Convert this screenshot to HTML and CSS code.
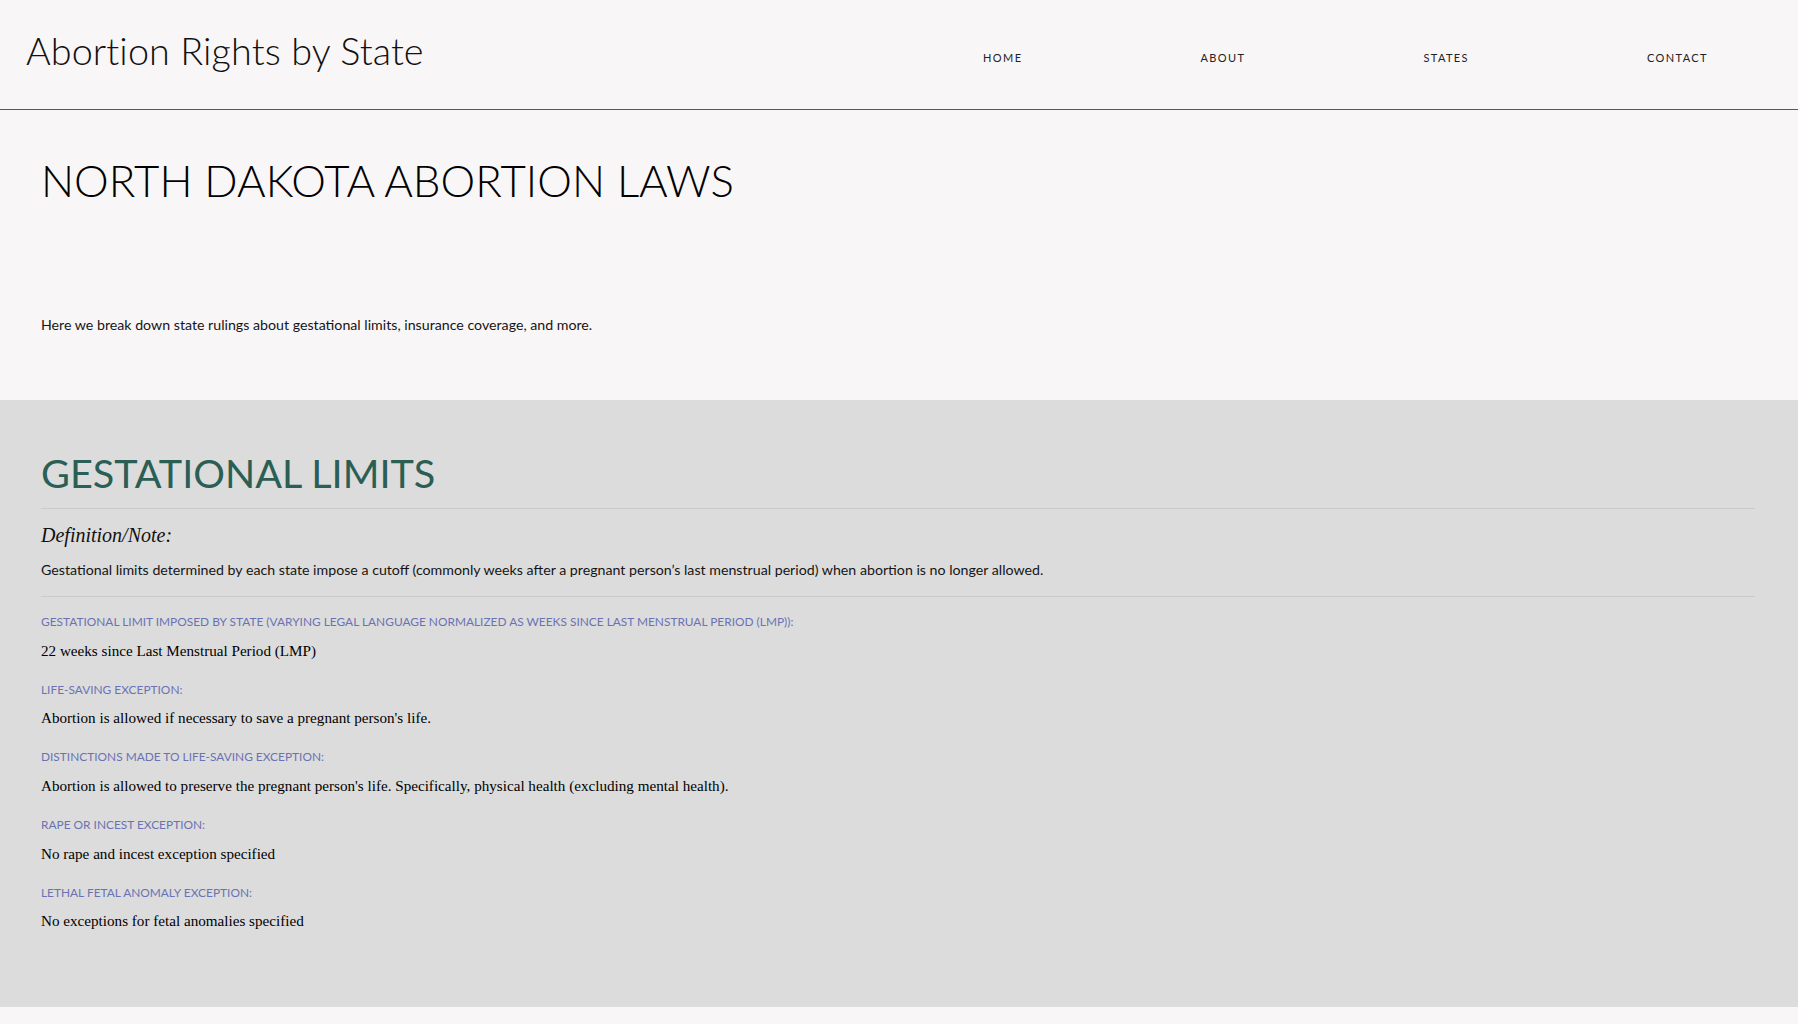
FILE: index.html
```html
<!DOCTYPE html>
<html lang="en">
<head>
<meta charset="utf-8">
<title>North Dakota Abortion Laws</title>
<link rel="stylesheet" href="styles.css">
</head>
<body>
<header class="site-header">
  <div class="site-title">Abortion Rights by State</div>
  <nav class="main-nav">
    <a class="nav-link" href="#">HOME</a>
    <a class="nav-link" href="#">ABOUT</a>
    <a class="nav-link" href="#">STATES</a>
    <a class="nav-link" href="#">CONTACT</a>
  </nav>
</header>
<section class="hero">
  <h1 class="page-title">NORTH DAKOTA ABORTION LAWS</h1>
  <p class="intro">Here we break down state rulings about gestational limits, insurance coverage, and more.</p>
</section>
<section class="panel">
  <h2 class="panel-title">GESTATIONAL LIMITS</h2>
  <div class="rule"></div>
  <div class="def-label">Definition/Note:</div>
  <p class="def-text">Gestational limits determined by each state impose a cutoff (commonly weeks after a pregnant person’s last menstrual period) when abortion is no longer allowed.</p>
  <div class="rule rule-second"></div>
  <dl class="facts">
    <dt class="fact-label">GESTATIONAL LIMIT IMPOSED BY STATE (VARYING LEGAL LANGUAGE NORMALIZED AS WEEKS SINCE LAST MENSTRUAL PERIOD (LMP)):</dt>
    <dd class="fact-value">22 weeks since Last Menstrual Period (LMP)</dd>
    <dt class="fact-label">LIFE-SAVING EXCEPTION:</dt>
    <dd class="fact-value">Abortion is allowed if necessary to save a pregnant person's life.</dd>
    <dt class="fact-label">DISTINCTIONS MADE TO LIFE-SAVING EXCEPTION:</dt>
    <dd class="fact-value">Abortion is allowed to preserve the pregnant person's life. Specifically, physical health (excluding mental health).</dd>
    <dt class="fact-label">RAPE OR INCEST EXCEPTION:</dt>
    <dd class="fact-value">No rape and incest exception specified</dd>
    <dt class="fact-label">LETHAL FETAL ANOMALY EXCEPTION:</dt>
    <dd class="fact-value">No exceptions for fetal anomalies specified</dd>
  </dl>
</section>
<div class="page-end"></div>
</body>
</html>
```

FILE: styles.css
```css
html, body {
  margin: 0;
  padding: 0;
}
body {
  background: #f9f6f7;
  font-family: "Lato", "Open Sans", sans-serif;
  color: #111;
}
.site-header {
  height: 110px;
  box-sizing: border-box;
  border-bottom: 1px solid #555a55;
  display: flex;
  justify-content: space-between;
  align-items: flex-start;
  padding: 0 90px 0 26px;
}
.site-title {
  margin-top: 31px;
  font-size: 37.8px;
  line-height: 40px;
  font-weight: 300;
  letter-spacing: 0.1px;
  color: #111;
}
.main-nav {
  display: flex;
  gap: 178px;
  margin-top: 51px;
}
.nav-link {
  font-size: 11px;
  line-height: 14px;
  letter-spacing: 1.4px;
  color: #222;
  text-decoration: none;
}
.hero {
  height: 290px;
  box-sizing: border-box;
  padding: 0 41px;
  overflow: hidden;
}
.page-title {
  margin: 42px 0 0;
  font-size: 43.8px;
  line-height: 56px;
  font-weight: 300;
  color: #000;
}
.intro {
  margin: 107px 0 0;
  font-size: 14.2px;
  line-height: 20px;
  font-weight: 400;
  color: #151515;
}
.panel {
  background: #dcdcdc;
  height: 607px;
  box-sizing: border-box;
  padding: 48px 43px 0 41px;
}
.panel-title {
  margin: 0;
  font-size: 39.6px;
  line-height: 50px;
  font-weight: 400;
  color: #2b5e55;
}
.rule {
  margin-top: 10px;
  height: 1px;
  background: #cacaca;
}
.def-label {
  margin-top: 14px;
  font-family: "Liberation Serif", serif;
  font-style: italic;
  font-size: 20px;
  line-height: 24px;
  color: #111;
}
.def-text {
  margin: 13px 0 0;
  font-size: 14.2px;
  line-height: 20px;
  font-weight: 400;
  color: #151515;
}
.rule-second {
  margin-top: 16px;
}
.facts {
  margin: 17px 0 0;
}
.fact-label {
  font-size: 11.9px;
  line-height: 16px;
  color: #6a72b3;
  font-weight: 400;
}
.fact-value {
  margin: 12.7px 0 23px;
  font-family: "Liberation Serif", serif;
  font-size: 15.15px;
  line-height: 16px;
  color: #000;
}
.page-end {
  height: 17px;
}
```
